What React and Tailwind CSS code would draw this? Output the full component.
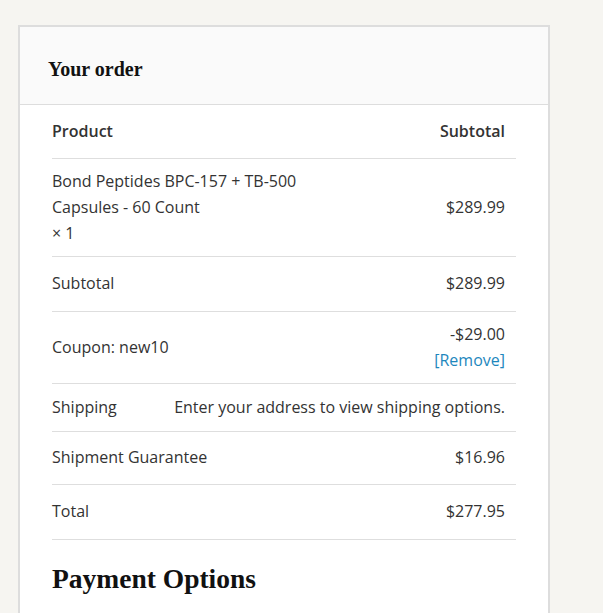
import React from "react";

const OrderRow = ({ h, children }) => (
  <div className={`${h} flex items-center justify-between border-b border-[#dedede] pb-[2px] pr-[11px]`}>
    {children}
  </div>
);

const App = () => {
  return (
    <div
      className="min-h-screen bg-[#f6f5f1] pl-[18px] pt-[25px] text-[16px] text-[#333333]"
      style={{ fontFamily: '"Open Sans", "Noto Sans", sans-serif' }}
    >
      <div className="w-[532px] border-2 border-[#dddddd] bg-white pb-[40px]">
        {/* Header */}
        <div className="h-[78px] border-b border-[#dddddd] bg-[#fafafa] pl-[28px] pt-[28px]">
          <h3
            className="text-[20px] font-bold leading-[28px] text-[#111111]"
            style={{ fontFamily: '"Liberation Serif", serif' }}
          >
            Your order
          </h3>
        </div>

        <div className="px-[32px] leading-[26px]">
          <OrderRow h="h-[54px]">
            <span className="font-semibold">Product</span>
            <span className="font-semibold">Subtotal</span>
          </OrderRow>

          <OrderRow h="h-[98px]">
            <div>
              <div>Bond Peptides BPC-157 + TB-500</div>
              <div>Capsules - 60 Count</div>
              <div>× 1</div>
            </div>
            <span>$289.99</span>
          </OrderRow>

          <OrderRow h="h-[55px]">
            <span>Subtotal</span>
            <span>$289.99</span>
          </OrderRow>

          <OrderRow h="h-[72px]">
            <span>Coupon: new10</span>
            <div className="text-right">
              <div>-$29.00</div>
              <a href="#" className="text-[#1e87bd]">[Remove]</a>
            </div>
          </OrderRow>

          <OrderRow h="h-[48px]">
            <span>Shipping</span>
            <span>Enter your address to view shipping options.</span>
          </OrderRow>

          <OrderRow h="h-[53px]">
            <span>Shipment Guarantee</span>
            <span>$16.96</span>
          </OrderRow>

          <OrderRow h="h-[55px]">
            <span>Total</span>
            <span>$277.95</span>
          </OrderRow>

          <h3
            className="mt-[21px] text-[27.5px] font-bold leading-[36px] text-[#111111]"
            style={{ fontFamily: '"Liberation Serif", serif' }}
          >
            Payment Options
          </h3>
        </div>
      </div>
    </div>
  );
};

export default App;
